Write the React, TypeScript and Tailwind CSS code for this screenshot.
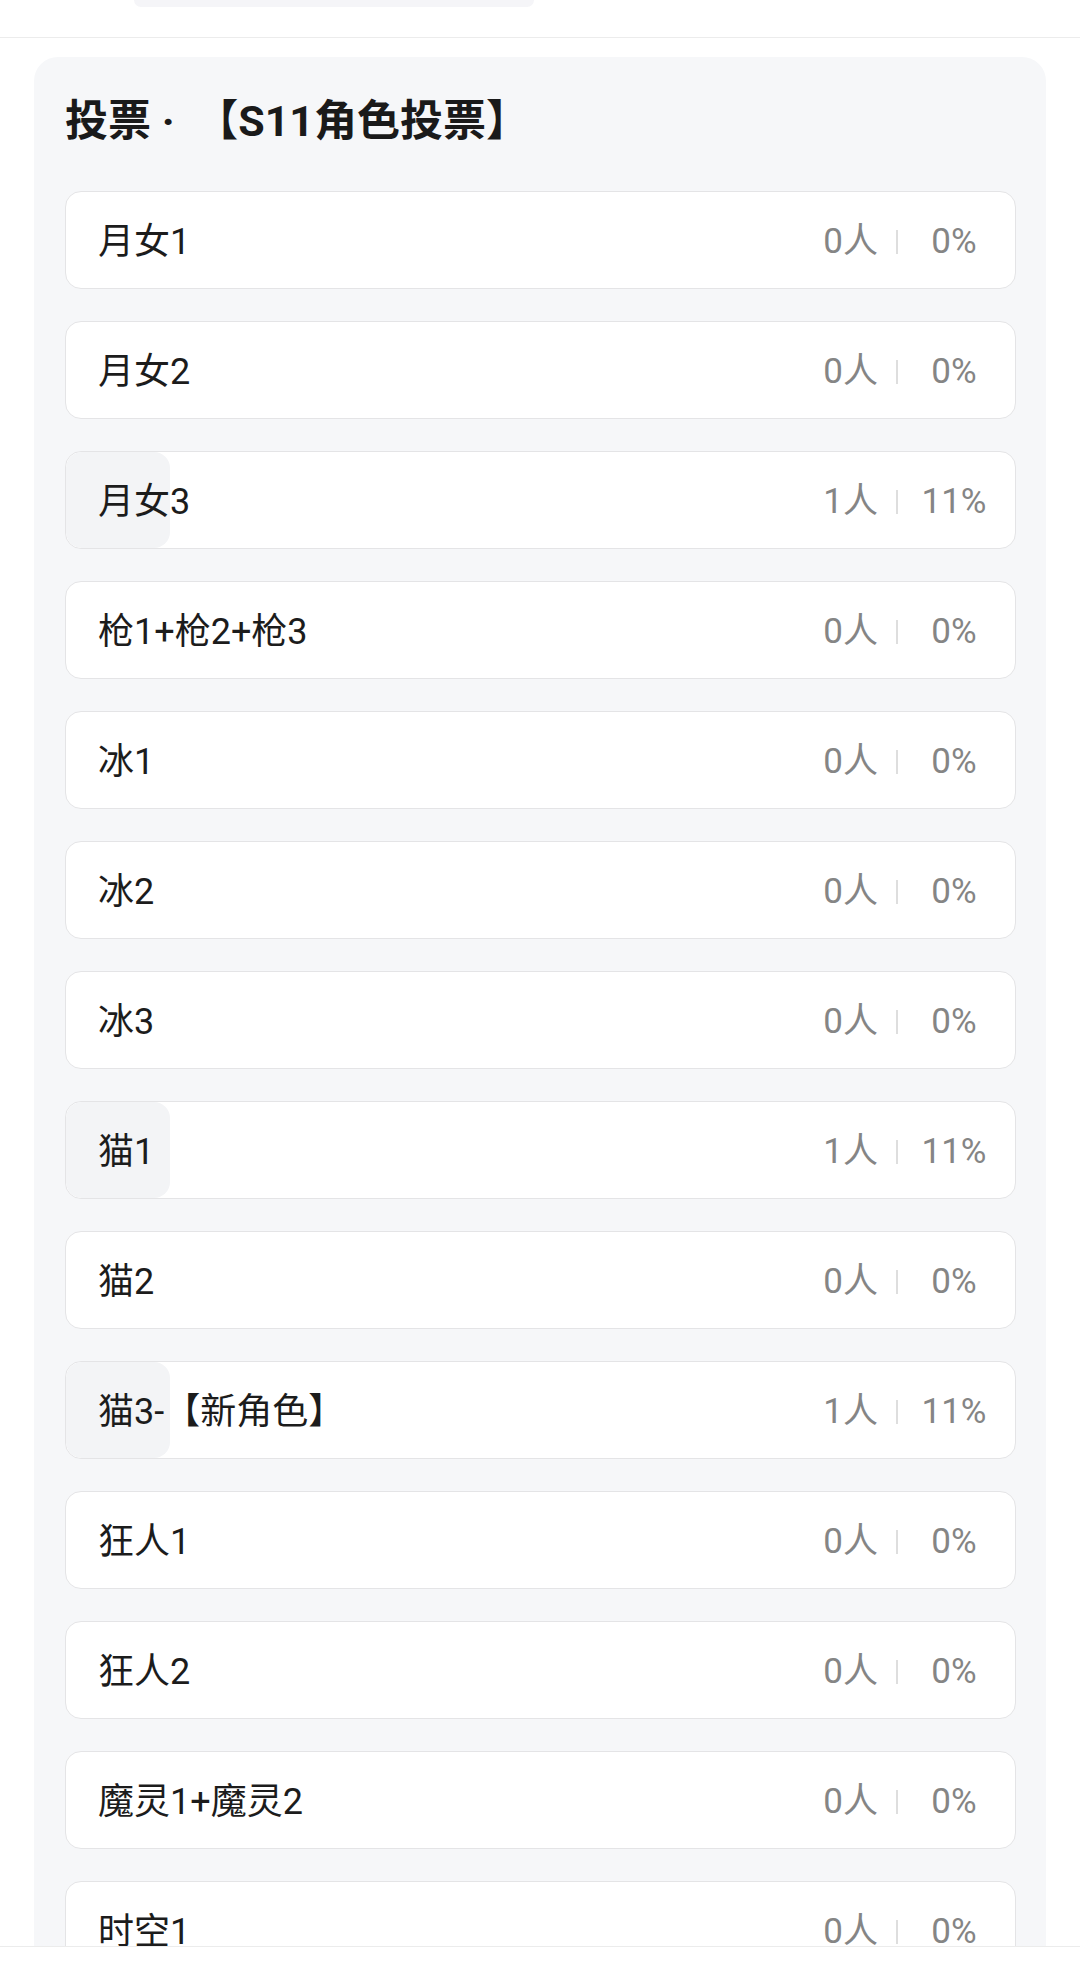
import React from 'react';

interface VoteOption {
  name: string;
  count: number;
  percent: number;
}

const options: VoteOption[] = [
  { name: '月女1', count: 0, percent: 0 },
  { name: '月女2', count: 0, percent: 0 },
  { name: '月女3', count: 1, percent: 11 },
  { name: '枪1+枪2+枪3', count: 0, percent: 0 },
  { name: '冰1', count: 0, percent: 0 },
  { name: '冰2', count: 0, percent: 0 },
  { name: '冰3', count: 0, percent: 0 },
  { name: '猫1', count: 1, percent: 11 },
  { name: '猫2', count: 0, percent: 0 },
  { name: '猫3-【新角色】', count: 1, percent: 11 },
  { name: '狂人1', count: 0, percent: 0 },
  { name: '狂人2', count: 0, percent: 0 },
  { name: '魔灵1+魔灵2', count: 0, percent: 0 },
  { name: '时空1', count: 0, percent: 0 },
];

const font = { fontFamily: 'Roboto, "Noto Sans CJK SC", sans-serif' };

const OptionRow: React.FC<{ option: VoteOption }> = ({ option }) => (
  <div className="relative h-[98px] shrink-0 rounded-[16px] border border-[#e4e4e6] bg-white overflow-hidden">
    {/* progress fill */}
    {option.percent > 0 && (
      <div
        className="absolute left-0 top-0 bottom-0 rounded-[16px] bg-[#f3f4f6]"
        style={{ width: `${option.percent}%` }}
      />
    )}
    <div className="relative flex h-full items-center pl-[32px] pr-[17px] pt-[3px]">
      <span className="flex-1 text-[36px] text-[#1c1c1c] leading-none">{option.name}</span>
      <span className="text-[35px] text-[#858585] leading-none">{option.count}人</span>
      <span className="ml-[18px] mr-[12px] h-[24px] w-[2px] bg-[#dedede]" />
      <span className="w-[88px] text-center text-[35px] text-[#858585] leading-none">{option.percent}%</span>
    </div>
  </div>
);

export default function App() {
  return (
    <div className="relative h-[1962px] w-[1080px] overflow-hidden bg-white" style={font}>
      {/* header remnant */}
      <div className="h-[38px] border-b border-[#ececec]">
        <div className="ml-[134px] h-[7px] w-[400px] rounded-b-[20px] bg-[#f5f5f8]" />
      </div>

      {/* vote card */}
      <div className="mx-[34px] mt-[19px] rounded-[24px] bg-[#f6f7f9] pl-[31px] pr-[30px] pt-[36px]">
        <h2 className="mb-[42px] h-[56px] text-[43px] font-bold leading-[56px] text-[#1a1a1a]">
          投票 ·<span className="ml-[42px]">【S11角色投票】</span>
        </h2>
        <div className="flex flex-col gap-[32px]">
          {options.map((o) => (
            <OptionRow key={o.name} option={o} />
          ))}
        </div>
      </div>

      {/* fixed bottom bar */}
      <div className="absolute bottom-0 left-0 right-0 h-[16px] border-t border-[#ececec] bg-white" />
    </div>
  );
}
